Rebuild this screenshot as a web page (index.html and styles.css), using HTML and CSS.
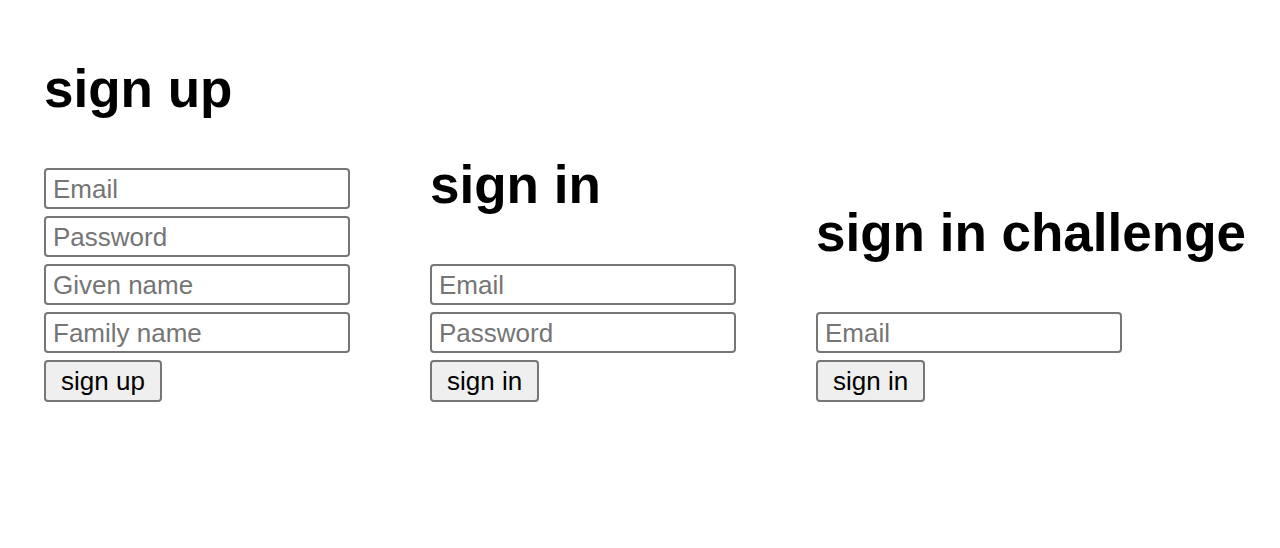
FILE: index.html
```html
<!DOCTYPE html>
<html>
<head>
<meta charset="utf-8">
<link rel="stylesheet" href="styles.css">
</head>
<body>
<div class="forms">
  <section class="panel">
    <h1 class="title">sign up</h1>
    <form class="form">
      <input class="field" type="email" placeholder="Email">
      <input class="field" type="password" placeholder="Password">
      <input class="field" type="text" placeholder="Given name">
      <input class="field" type="text" placeholder="Family name">
      <div><button class="btn" type="button">sign up</button></div>
    </form>
  </section>
  <section class="panel">
    <h1 class="title">sign in</h1>
    <form class="form">
      <input class="field" type="email" placeholder="Email">
      <input class="field" type="password" placeholder="Password">
      <div><button class="btn" type="button">sign in</button></div>
    </form>
  </section>
  <section class="panel">
    <h1 class="title">sign in challenge</h1>
    <form class="form">
      <input class="field" type="email" placeholder="Email">
      <div><button class="btn" type="button">sign in</button></div>
    </form>
  </section>
</div>
</body>
</html>
```
FILE: styles.css
```css
html, body {
  margin: 0;
  padding: 0;
  background: #ffffff;
}
body {
  font-family: "Liberation Sans", Arial, Helvetica, sans-serif;
  color: #000;
}
.forms {
  display: grid;
  grid-template-columns: 386px 386px auto;
  align-items: end;
  padding: 56px 0 0 44px;
}
.panel {
  display: flex;
  flex-direction: column;
}
.title {
  margin: 2px 0 49px 0;
  font-size: 53px;
  line-height: 61px;
  font-weight: bold;
  white-space: nowrap;
}
.form {
  display: flex;
  flex-direction: column;
  gap: 7px;
  margin: 0;
}
.field {
  box-sizing: border-box;
  width: 306px;
  height: 41px;
  margin: 0;
  padding: 2px 7px 0 7px;
  border: 2px solid #767676;
  border-radius: 4px;
  font-family: "Liberation Sans", Arial, sans-serif;
  font-size: 26px;
  color: #000;
  background: #fff;
  outline: none;
}
.field::placeholder {
  color: #757575;
  opacity: 1;
}
.btn {
  box-sizing: border-box;
  height: 42px;
  margin: 0;
  padding: 1px 15px 0 15px;
  border: 2px solid #767676;
  border-radius: 4px;
  background: #efefef;
  font-family: "Liberation Sans", Arial, sans-serif;
  font-size: 26px;
  color: #000;
  cursor: pointer;
}
```
